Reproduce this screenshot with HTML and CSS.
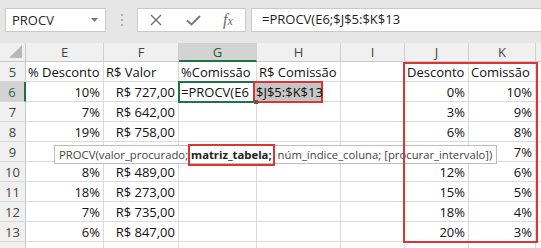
FILE: index.html
```html
<!DOCTYPE html>
<html>
<head>
<meta charset="utf-8">
<link rel="stylesheet" href="styles.css">
</head>
<body>
<div class="fbar">
  <div class="namebox"><span>PROCV</span><svg class="dd" width="8" height="5" viewBox="0 0 8 5"><path d="M0 0H7L3.5 4Z" fill="#7a7a7a"/></svg></div>
  <div class="grip"><i></i><i></i><i></i></div>
  <div class="btns">
    <svg class="ix" width="12" height="12" viewBox="0 0 12 12"><path d="M1 1L11 11M11 1L1 11" stroke="#6e6e6e" stroke-width="1.4" fill="none"/></svg>
    <svg class="ic" width="15" height="11" viewBox="0 0 15 11"><path d="M1 5.5L5.5 9.5L14 1" stroke="#7a7a7a" stroke-width="2" fill="none"/></svg>
    <span class="fx">f<span class="fxx">x</span></span>
  </div>
  <div class="finput">=PROCV(E6;$J$5:$K$13</div>
</div>
<div class="sheet">
  <div class="corner"><svg width="13" height="13" viewBox="0 0 13 13"><path d="M13 0V13H0Z" fill="#b9b9b9"/></svg></div>
  <div class="h">E</div><div class="h">F</div><div class="h hsel">G</div><div class="h">H</div><div class="h">I</div><div class="h">J</div><div class="h">K</div><div class="h hl"></div>

  <div class="rh">5</div><div class="c">% Desconto</div><div class="c">R$ Valor</div><div class="c">%Comissão</div><div class="c">R$ Comissão</div><div class="c"></div><div class="c">Desconto</div><div class="c">Comissão</div><div class="c"></div>

  <div class="rh rsel">6</div><div class="c r">10%</div><div class="c r">R$ 727,00</div>
  <div class="c g6"><div class="edit">=PROCV(E6</div><div class="handle"></div></div>
  <div class="c h6"><div class="refsel">$J$5:$K$13</div></div>
  <div class="c"></div><div class="c r">0%</div><div class="c r">10%</div><div class="c"></div>

  <div class="rh">7</div><div class="c r">7%</div><div class="c r">R$ 642,00</div><div class="c"></div><div class="c"></div><div class="c"></div><div class="c r">3%</div><div class="c r">9%</div><div class="c"></div>
  <div class="rh">8</div><div class="c r">19%</div><div class="c r">R$ 758,00</div><div class="c"></div><div class="c"></div><div class="c"></div><div class="c r">6%</div><div class="c r">8%</div><div class="c"></div>
  <div class="rh">9</div><div class="c r"></div><div class="c r"></div><div class="c"></div><div class="c"></div><div class="c"></div><div class="c r"></div><div class="c r">7%</div><div class="c"></div>
  <div class="rh">10</div><div class="c r">8%</div><div class="c r">R$ 489,00</div><div class="c"></div><div class="c"></div><div class="c"></div><div class="c r">12%</div><div class="c r">6%</div><div class="c"></div>
  <div class="rh">11</div><div class="c r">18%</div><div class="c r">R$ 273,00</div><div class="c"></div><div class="c"></div><div class="c"></div><div class="c r">15%</div><div class="c r">5%</div><div class="c"></div>
  <div class="rh">12</div><div class="c r">7%</div><div class="c r">R$ 735,00</div><div class="c"></div><div class="c"></div><div class="c"></div><div class="c r">18%</div><div class="c r">4%</div><div class="c"></div>
  <div class="rh">13</div><div class="c r">6%</div><div class="c r">R$ 847,00</div><div class="c"></div><div class="c"></div><div class="c"></div><div class="c r">20%</div><div class="c r">3%</div><div class="c"></div>
  <div class="rh last"></div><div class="c last"></div><div class="c last"></div><div class="c last"></div><div class="c last"></div><div class="c last"></div><div class="c last"></div><div class="c last"></div><div class="c last"></div>

  <div class="tip"><span>PROCV(valor_procurado;&nbsp;</span><span class="arg">matriz_tabela;</span><span>&nbsp;núm_índice_coluna; [procurar_intervalo])</span></div>
  <div class="redbox"></div>
</div>
</body>
</html>
```

FILE: styles.css
```css
* { box-sizing: border-box; }
html, body { margin: 0; padding: 0; }
body {
  width: 541px;
  height: 248px;
  overflow: hidden;
  background: #fff;
  font-family: "Open Sans", "Liberation Sans", sans-serif;
}

/* formula bar */
.fbar {
  height: 43px;
  background: #e6e6e6;
  display: flex;
  align-items: flex-start;
  padding-top: 8px;
  padding-left: 5px;
}
.namebox {
  width: 101px;
  height: 24px;
  background: #fff;
  border: 1px solid #c9c9c9;
  display: flex;
  align-items: center;
  justify-content: space-between;
  padding: 0 6px 0 6px;
  font-size: 13px;
  color: #262626;
}
.grip {
  width: 31px;
  height: 24px;
  display: flex;
  flex-direction: column;
  align-items: center;
  justify-content: center;
  gap: 3px;
}
.grip i { display: block; width: 2px; height: 2px; background: #b0b0b0; }
.btns {
  width: 109px;
  height: 24px;
  background: #fff;
  border: 1px solid #c9c9c9;
  display: flex;
  align-items: center;
  padding-left: 12px;
}
.ic { margin-left: 24px; }
.fx {
  margin-left: 22px;
  font-family: "Liberation Serif", serif;
  font-style: italic;
  font-size: 16px;
  color: #6a6a6a;
  line-height: 1;
}
.fxx { font-size: 12px; }
.finput {
  flex: 1;
  height: 24px;
  margin-left: 5px;
  background: #fff;
  border: 1px solid #c9c9c9;
  border-right: none;
  font-size: 13px;
  padding-left: 10px;
  line-height: 21px;
  color: #1e1e1e;
}

/* sheet */
.sheet {
  position: relative;
  display: grid;
  grid-template-columns: 26px 78px 75px 78px 84px 64px 64px 67px 1fr;
  grid-template-rows: 19px repeat(9, 20px) 6px;
  font-size: 13px;
}
.corner {
  background: #f0f0f0;
  border-right: 1px solid #c8c8c8;
  border-bottom: 1px solid #c8c8c8;
  display: flex;
  align-items: flex-end;
  justify-content: flex-end;
  padding: 0 3px 3px 0;
}
.corner svg { display: block; }
.h {
  background: #f0f0f0;
  border-right: 1px solid #cfcfcf;
  border-bottom: 1px solid #c8c8c8;
  text-align: center;
  color: #444;
  line-height: 18px;
}
.hl { border-right: none; }
.hsel {
  background: #d3d3d3;
  border-bottom: 2px solid #217346;
  color: #1f5e3a;
}
.rh {
  background: #f0f0f0;
  border-right: 1px solid #c8c8c8;
  border-bottom: 1px solid #d6d6d6;
  text-align: center;
  color: #444;
  line-height: 19px;
  padding-top: 1px;
}
.rsel {
  background: #d3d3d3;
  border-right: 2px solid #217346;
  color: #217346;
}
.c {
  border-right: 1px solid #dadada;
  border-bottom: 1px solid #dadada;
  padding: 1px 3px 0 2px;
  line-height: 18px;
  white-space: nowrap;
  color: #111;
}
.last { border-bottom: none; }
.r { text-align: right; }
.g6, .h6 { position: relative; }
.edit {
  position: absolute;
  left: -1px;
  top: -1px;
  width: 78px;
  height: 22px;
  border: 2px solid #217346;
  padding-left: 1px;
  line-height: 18px;
  background: #fff;
  color: #111;
  z-index: 1;
}
.handle {
  position: absolute;
  right: -2px;
  bottom: -3px;
  width: 4px;
  height: 4px;
  background: #5a5a5a;
  z-index: 3;
}
.refsel {
  position: absolute;
  left: -4px;
  top: -1px;
  width: 70px;
  height: 22px;
  border: 2px solid #dc3434;
  background: #c6c6c6;
  padding-left: 1px;
  line-height: 18px;
  color: #111;
  z-index: 2;
}

.tip {
  position: absolute;
  left: 54px;
  top: 102px;
  width: 443px;
  height: 19px;
  background: #fff;
  border: 1px solid #bdbdbd;
  font-size: 11.3px;
  color: #444;
  display: flex;
  align-items: center;
  padding-left: 4px;
  white-space: nowrap;
  z-index: 4;
}
.arg {
  font-weight: bold;
  color: #222;
  border: 2px solid #dc3434;
  height: 22px;
  line-height: 18px;
  padding: 0 1px;
  margin-left: -3px;
}
.redbox {
  position: absolute;
  left: 403px;
  top: 19px;
  width: 135px;
  height: 181px;
  border: 2px solid #dc3434;
  z-index: 5;
}
```
